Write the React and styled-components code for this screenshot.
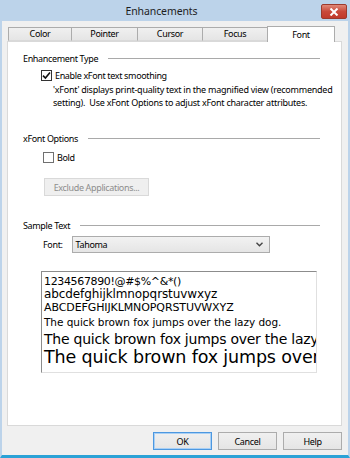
import React from 'react'
import styled, { createGlobalStyle } from 'styled-components'

const GlobalStyle = createGlobalStyle`
  html, body { margin: 0; padding: 0; background: #f0f0f0; }
  body {
    font-family: "Noto Sans", "Open Sans", sans-serif;
    font-size: 9px;
    letter-spacing: -0.35px;
    color: #000;
  }
`

const Window = styled.div`
  width: 350px;
  height: 458px;
  display: flex;
  flex-direction: column;
  overflow: hidden;
  box-shadow: inset 1px 1px 0 #3f6a86;
`

const TitleBar = styled.div`
  height: 21px;
  flex: none;
  display: flex;
  align-items: center;
  background: #bcd3ea;
`

const Title = styled.div`
  flex: 1;
  text-align: center;
  font-size: 10.5px;
  letter-spacing: -0.1px;
  color: #1e1e1e;
  padding-left: 2px;
`

const CloseButton = styled.div`
  width: 26px;
  height: 15px;
  margin: 2px 3px 0 0;
  display: flex;
  align-items: center;
  justify-content: center;
  box-sizing: border-box;
  border: 1px solid #9c3a2d;
  border-radius: 2px;
  background: linear-gradient(#e08878, #c9493a 50%, #c13a2b);
`

const Client = styled.div`
  flex: 1;
  display: flex;
  flex-direction: column;
  padding: 6px 6px 0 5px;
  border-left: 2px solid #bcd3ea;
  border-right: 2px solid #bcd3ea;
  border-bottom: 3px solid #2ba2d6;
  background: #f0f0f0;
`

const TabStrip = styled.div`
  display: flex;
  height: 14px;
  padding-left: 2px;
  position: relative;
  z-index: 1;
`

const Tab = styled.div`
  width: ${p => p.$w}px;
  box-sizing: border-box;
  height: ${p => (p.$active ? 16 : 14)}px;
  margin-top: ${p => (p.$active ? -1 : 0)}px;
  margin-left: -1px;
  border: 1px solid #acacac;
  border-bottom: ${p => (p.$active ? 'none' : '1px solid #d9d9d9')};
  background: ${p => (p.$active ? '#fff' : 'linear-gradient(#f0f0f0, #e5e5e5)')};
  display: flex;
  align-items: center;
  justify-content: center;
  line-height: 12px;
`

const Panel = styled.div`
  flex: 1;
  background: #fff;
  border: 1px solid #d9d9d9;
  padding: 10px 21px 0 15px;
  display: flex;
  flex-direction: column;
`

const GroupHeader = styled.div`
  display: flex;
  align-items: center;
  line-height: 13px;
  margin-top: ${p => p.$mt || 0}px;
  &::after {
    content: '';
    flex: 1;
    height: 1px;
    margin-left: 10px;
    background: #a9a9a9;
  }
`

const CheckRow = styled.label`
  display: flex;
  align-items: center;
  gap: 3px;
  height: 13px;
  line-height: 13px;
  margin: ${p => p.$mt}px 0 0 ${p => p.$ml}px;
`

const Box = styled.span`
  width: 11px;
  height: 11px;
  box-sizing: border-box;
  border: 1px solid ${p => (p.$checked ? '#333' : '#707070')};
  background: #fff;
  display: flex;
  align-items: center;
  justify-content: center;
`

const Description = styled.p`
  margin: 1px 0 0 30px;
  line-height: 13px;
  letter-spacing: -0.25px;
  white-space: nowrap;
`

const DisabledButton = styled.div`
  width: 105px;
  height: 18px;
  box-sizing: border-box;
  margin: 14px 0 0 21px;
  border: 1px solid #d9d9d9;
  background: #efefef;
  color: #8d8d8d;
  display: flex;
  align-items: center;
  justify-content: center;
`

const FontRow = styled.div`
  display: flex;
  align-items: center;
  gap: 9px;
  height: 17px;
  margin: 4px 0 0 20px;
`

const Select = styled.div`
  width: 198px;
  height: 17px;
  box-sizing: border-box;
  border: 1px solid #acacac;
  background: linear-gradient(#f2f2f2, #e5e5e5);
  display: flex;
  align-items: center;
  justify-content: space-between;
  padding: 0 6px 0 3px;
`

const SampleBox = styled.div`
  width: 276px;
  height: 102px;
  box-sizing: border-box;
  margin: 18px 0 0 18px;
  border: 1px solid #e0e0e0;
  border-top-color: #8c8c8c;
  border-left-color: #8c8c8c;
  padding: 3px 0 0 2px;
  overflow: hidden;
  white-space: nowrap;
  font-family: "DejaVu Sans", Verdana, sans-serif;
`

const SampleLine = styled.div`
  font-size: ${p => p.$size}px;
  line-height: ${p => p.$lh}px;
  letter-spacing: ${p => p.$ls}px;
`

const ButtonRow = styled.div`
  display: flex;
  justify-content: flex-end;
  gap: 6px;
  height: 18px;
  margin: 6px 0 5px;
`

const DialogButton = styled.div`
  width: 59px;
  height: 18px;
  box-sizing: border-box;
  border: 1px solid ${p => (p.$default ? '#4d98e0' : '#acacac')};
  box-shadow: ${p => (p.$default ? 'inset 0 0 0 1px #a9d0f5' : 'none')};
  background: linear-gradient(#f0f0f0, #e5e5e5);
  display: flex;
  align-items: center;
  justify-content: center;
`

const tabs = [
  ['Color', 64],
  ['Pointer', 67],
  ['Cursor', 66],
  ['Focus', 66],
  ['Font', 68],
]

const samples = [
  ['1234567890!@#$%^&*()', 11, 13, -0.35],
  ['abcdefghijklmnopqrstuvwxyz', 12, 13, -0.1],
  ['ABCDEFGHIJKLMNOPQRSTUVWXYZ', 11, 14, -0.1],
  ['The quick brown fox jumps over the lazy dog.', 10.5, 14, -0.05],
  ['The quick brown fox jumps over the lazy dog.', 14, 20, -0.25],
  ['The quick brown fox jumps over the lazy dog.', 17.5, 17, -0.15],
]

function Check() {
  return (
    <svg width="9" height="9" viewBox="0 0 9 9">
      <path d="M1 4.6 L3.4 7 L8 1.5" fill="none" stroke="#111" strokeWidth="1.6" />
    </svg>
  )
}

export default function App() {
  return (
    <Window>
      <GlobalStyle />
      <TitleBar>
        <Title>Enhancements</Title>
        <CloseButton>
          <svg width="10" height="8" viewBox="0 0 10 8">
            <path d="M1.5 0.5 L8.5 7.5 M8.5 0.5 L1.5 7.5" stroke="#fff" strokeWidth="2" />
          </svg>
        </CloseButton>
      </TitleBar>
      <Client>
        <TabStrip>
          {tabs.map(([name, w]) => (
            <Tab key={name} $w={w} $active={name === 'Font'}>{name}</Tab>
          ))}
        </TabStrip>
        <Panel>
          <GroupHeader>Enhancement Type</GroupHeader>
          <CheckRow $mt={4} $ml={18}>
            <Box $checked><Check /></Box>
            Enable xFont text smoothing
          </CheckRow>
          <Description>
            'xFont' displays print-quality text in the magnified view (recommended
            <br />
            setting).&nbsp; Use xFont Options to adjust xFont character attributes.
          </Description>
          <GroupHeader $mt={23}>xFont Options</GroupHeader>
          <CheckRow $mt={6} $ml={20}>
            <Box />
            Bold
          </CheckRow>
          <DisabledButton>Exclude Applications...</DisabledButton>
          <GroupHeader $mt={23}>Sample Text</GroupHeader>
          <FontRow>
            <span>Font:</span>
            <Select>
              <span>Tahoma</span>
              <svg width="7" height="5" viewBox="0 0 7 5">
                <path d="M0.5 0.8 L3.5 3.8 L6.5 0.8" fill="none" stroke="#444" strokeWidth="1.4" />
              </svg>
            </Select>
          </FontRow>
          <SampleBox>
            {samples.map(([text, size, lh, ls], i) => (
              <SampleLine key={i} $size={size} $lh={lh} $ls={ls}>{text}</SampleLine>
            ))}
          </SampleBox>
        </Panel>
        <ButtonRow>
          <DialogButton $default>OK</DialogButton>
          <DialogButton>Cancel</DialogButton>
          <DialogButton>Help</DialogButton>
        </ButtonRow>
      </Client>
    </Window>
  )
}
